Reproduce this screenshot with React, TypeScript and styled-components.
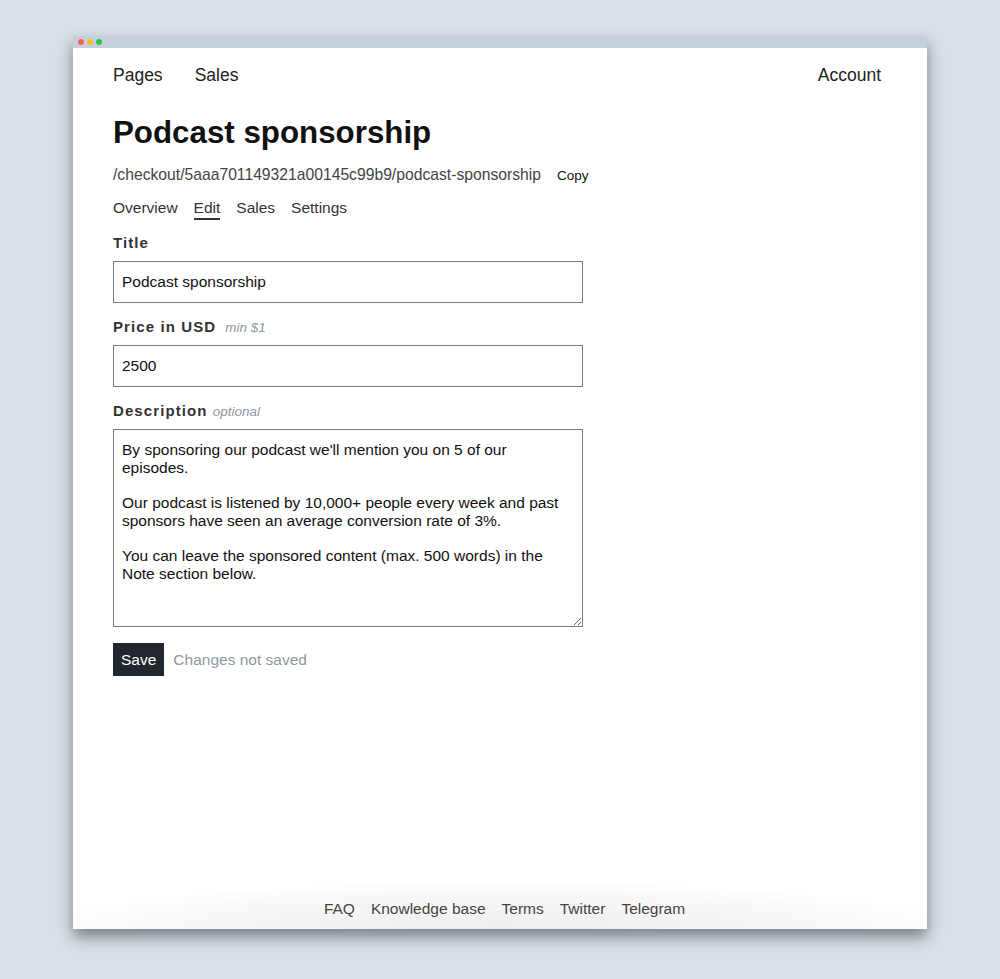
import React from "react";
import styled, { createGlobalStyle } from "styled-components";

const GlobalStyle = createGlobalStyle`
  html, body {
    margin: 0;
    padding: 0;
    background: #d9e0e8;
  }
  body {
    font-family: "Liberation Sans", Arial, Helvetica, sans-serif;
    color: #222;
  }
`;

// layout
const Page = styled.div`
  padding: 36px 73px 50px;
`;

const Window = styled.div`
  height: 893px;
  display: flex;
  flex-direction: column;
  background: #fff;
  box-shadow: 0 8px 14px rgba(30, 36, 44, 0.5);
`;

const TitleBar = styled.div`
  height: 12px;
  flex-shrink: 0;
  display: flex;
  align-items: center;
  gap: 3px;
  padding-left: 5px;
  background: #c5d0da;
`;

const Dot = styled.span<{ $color: string }>`
  width: 6px;
  height: 6px;
  border-radius: 50%;
  background: ${(p) => p.$color};
`;

const Content = styled.div`
  flex: 1;
  display: flex;
  flex-direction: column;
  padding: 0 46px 0 40px;
`;

// nav
const Nav = styled.nav`
  display: flex;
  align-items: center;
  padding-top: 16px;
  font-size: 17.5px;
  line-height: 22px;
  color: #222;
`;

const NavLink = styled.a`
  margin-right: 32px;
  color: inherit;
  text-decoration: none;
`;

const Spacer = styled.div`
  flex: 1;
`;

// header
const Heading = styled.h1`
  margin: 29px 0 0;
  font-size: 31.3px;
  line-height: 36px;
  font-weight: 700;
  color: #111;
`;

const UrlRow = styled.div`
  display: flex;
  align-items: center;
  gap: 16px;
  margin-top: 14px;
  line-height: 20px;
`;

const Url = styled.span`
  font-size: 15.7px;
  color: #444;
`;

const CopyButton = styled.button`
  border: none;
  background: none;
  padding: 0;
  font-family: inherit;
  font-size: 13.5px;
  color: #111;
  cursor: pointer;
`;

const Tabs = styled.div`
  display: flex;
  gap: 16px;
  margin-top: 13px;
  font-size: 15.5px;
  line-height: 20px;
`;

const Tab = styled.a<{ $active?: boolean }>`
  color: #333;
  text-decoration: none;
  border-bottom: 2px solid ${(p) => (p.$active ? "#333" : "transparent")};
`;

// form
const Form = styled.form`
  width: 470px;
  margin-top: 13px;
  display: flex;
  flex-direction: column;
`;

const Label = styled.label<{ $first?: boolean }>`
  display: flex;
  align-items: baseline;
  height: 20px;
  margin-top: ${(p) => (p.$first ? "0" : "14px")};
  margin-bottom: 8px;
  font-size: 15px;
  line-height: 20px;
  font-weight: 700;
  letter-spacing: 1.1px;
  color: #333;
`;

const Hint = styled.span<{ $gap: number }>`
  margin-left: ${(p) => p.$gap}px;
  font-size: 13.5px;
  font-weight: 400;
  font-style: italic;
  letter-spacing: 0;
  color: #8e99a4;
`;

const Input = styled.input`
  box-sizing: border-box;
  width: 100%;
  height: 42px;
  padding: 0 8px;
  border: 1px solid #7a7d82;
  border-radius: 0;
  font-family: inherit;
  font-size: 15.5px;
  color: #111;
  outline: none;
`;

const TextArea = styled.textarea`
  box-sizing: border-box;
  width: 100%;
  height: 198px;
  padding: 11px 8px 8px;
  border: 1px solid #7a7d82;
  border-radius: 0;
  font-family: inherit;
  font-size: 15.5px;
  line-height: 17.7px;
  color: #111;
  outline: none;
`;

const Actions = styled.div`
  display: flex;
  align-items: center;
  gap: 9px;
  margin-top: 16px;
`;

const SaveButton = styled.button`
  height: 33px;
  padding: 0 8px;
  border: none;
  background: #22272e;
  color: #fff;
  font-family: inherit;
  font-size: 15.5px;
`;

const Status = styled.span`
  font-size: 15.5px;
  color: #8e99a4;
`;

// footer
const Footer = styled.footer`
  margin-top: auto;
  display: flex;
  justify-content: center;
  gap: 16px;
  padding: 30px 0 10px 9px;
  font-size: 15.5px;
  line-height: 20px;
  background: radial-gradient(ellipse 75% 110% at 50% 100%, #eeeeee 0%, #f9f9f9 55%, #fff 75%);
`;

const FooterLink = styled.a`
  color: #444;
  text-decoration: none;
`;

const description = `By sponsoring our podcast we'll mention you on 5 of our episodes.

Our podcast is listened by 10,000+ people every week and past sponsors have seen an average conversion rate of 3%.

You can leave the sponsored content (max. 500 words) in the Note section below.`;

const App = () => {
  return (
    <>
      <GlobalStyle />
      <Page>
        <Window>
          <TitleBar>
            <Dot $color="#fc5f57" />
            <Dot $color="#fdbc2e" />
            <Dot $color="#28c840" />
          </TitleBar>
          <Content>
            <Nav>
              <NavLink>Pages</NavLink>
              <NavLink>Sales</NavLink>
              <Spacer />
              <NavLink style={{ marginRight: 0 }}>Account</NavLink>
            </Nav>

            <Heading>Podcast sponsorship</Heading>
            <UrlRow>
              <Url>/checkout/5aaa701149321a00145c99b9/podcast-sponsorship</Url>
              <CopyButton type="button">Copy</CopyButton>
            </UrlRow>

            <Tabs>
              <Tab>Overview</Tab>
              <Tab $active>Edit</Tab>
              <Tab>Sales</Tab>
              <Tab>Settings</Tab>
            </Tabs>

            <Form onSubmit={(e) => e.preventDefault()}>
              <Label $first>Title</Label>
              <Input defaultValue="Podcast sponsorship" />

              <Label>
                Price in USD<Hint $gap={9}>min $1</Hint>
              </Label>
              <Input defaultValue="2500" />

              <Label>
                Description<Hint $gap={5}>optional</Hint>
              </Label>
              <TextArea defaultValue={description} />

              <Actions>
                <SaveButton type="submit">Save</SaveButton>
                <Status>Changes not saved</Status>
              </Actions>
            </Form>
          </Content>
          <Footer>
            <FooterLink>FAQ</FooterLink>
            <FooterLink>Knowledge base</FooterLink>
            <FooterLink>Terms</FooterLink>
            <FooterLink>Twitter</FooterLink>
            <FooterLink>Telegram</FooterLink>
          </Footer>
        </Window>
      </Page>
    </>
  );
};

export default App;
